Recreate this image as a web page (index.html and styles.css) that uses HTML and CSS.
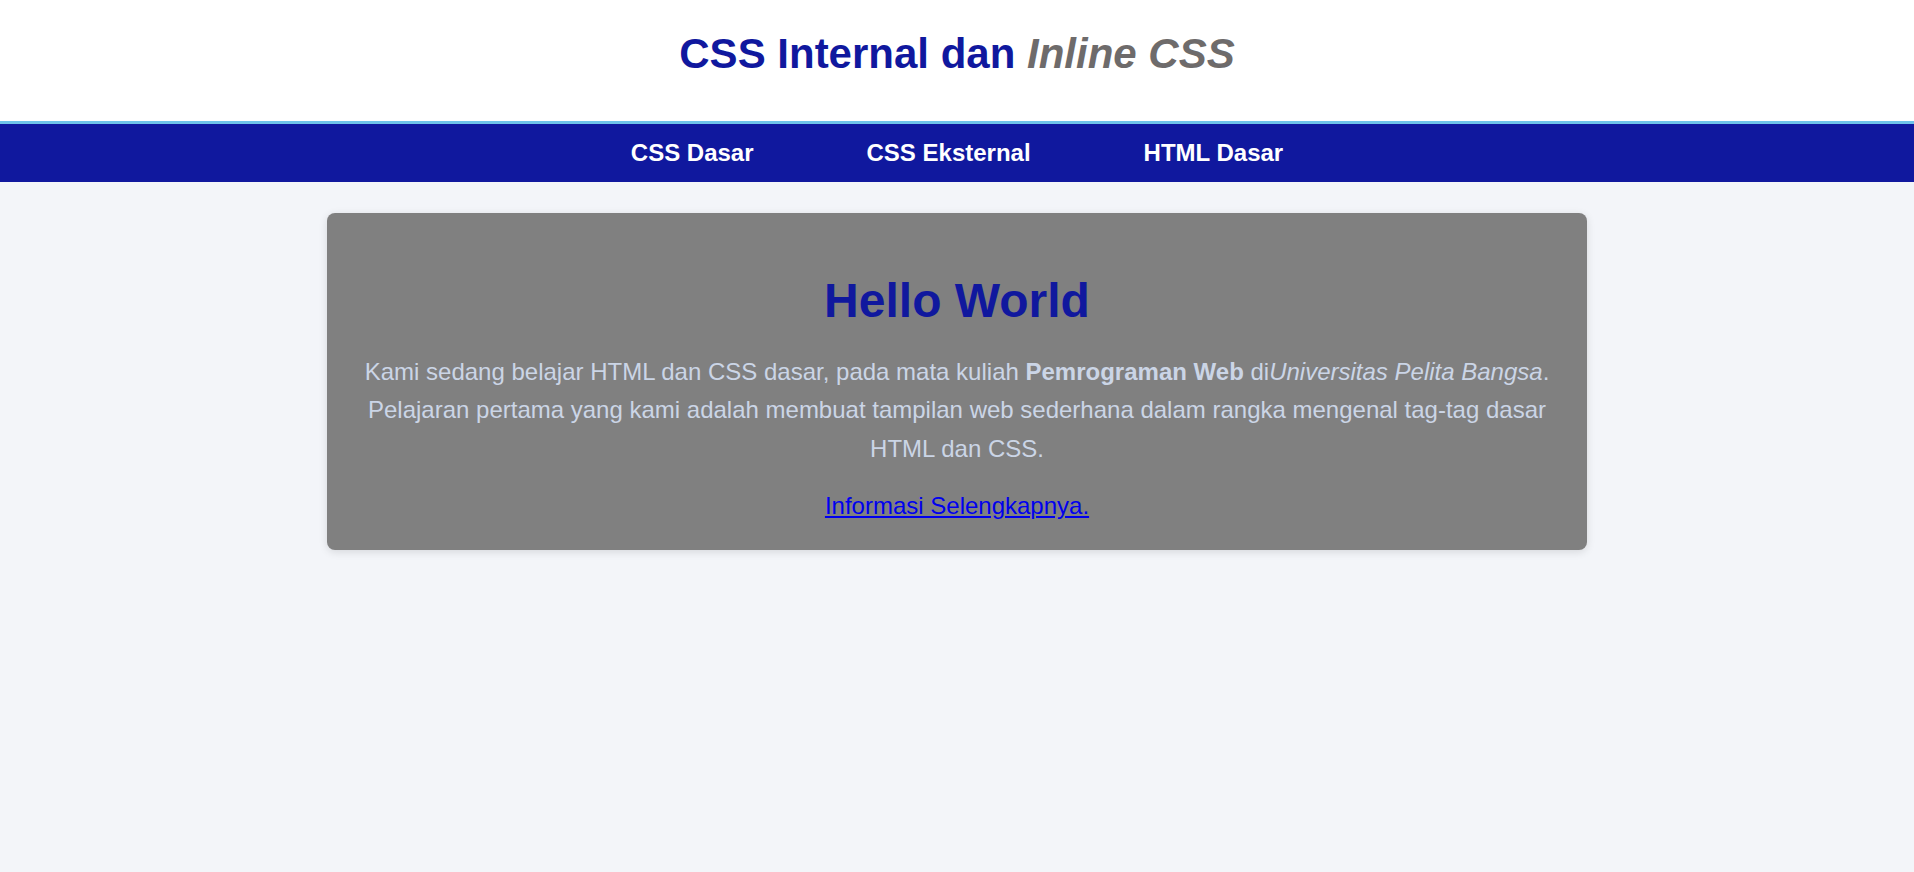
FILE: index.html
```html
<!DOCTYPE html>
<html lang="id">
<head>
<meta charset="utf-8">
<title>CSS Internal dan Inline CSS</title>
<link rel="stylesheet" href="styles.css">
</head>
<body>
<header class="site-header">
  <h1 class="site-title">CSS Internal dan <em class="title-em">Inline CSS</em></h1>
</header>
<nav class="main-nav">
  <a class="nav-link" href="#">CSS Dasar</a>
  <a class="nav-link" href="#">CSS Eksternal</a>
  <a class="nav-link" href="#">HTML Dasar</a>
</nav>
<main class="content">
  <section class="card">
    <h2 class="card-title">Hello World</h2>
    <p class="card-text">Kami sedang belajar HTML dan CSS dasar, pada mata kuliah <strong>Pemrograman Web</strong> di<em>Universitas Pelita Bangsa</em>. Pelajaran pertama yang kami adalah membuat tampilan web sederhana dalam rangka mengenal tag-tag dasar HTML dan CSS.</p>
    <p class="card-more"><a class="more-link" href="#">Informasi Selengkapnya.</a></p>
  </section>
</main>
</body>
</html>
```

FILE: styles.css
```css
* { box-sizing: border-box; }
html, body {
  margin: 0;
  padding: 0;
}
body {
  font-family: "Liberation Sans", Arial, sans-serif;
  background: #f3f5f9;
  min-height: 872px;
}
.site-header {
  background: #ffffff;
  padding: 30px 0 43px;
  border-bottom: 3px solid #6fc3ea;
  text-align: center;
}
.site-title {
  margin: 0;
  font-size: 42px;
  font-weight: bold;
  line-height: normal;
  color: #10189e;
}
.title-em {
  font-style: italic;
  color: #6e6b6b;
}
.main-nav {
  background: #10189e;
  display: flex;
  justify-content: center;
  gap: 113px;
  padding: 15px 0;
}
.nav-link {
  color: #ffffff;
  font-size: 24px;
  font-weight: bold;
  text-decoration: none;
  line-height: normal;
}
.content {
  padding-top: 31px;
  display: flex;
  justify-content: center;
}
.card {
  width: 1260px;
  background: #808080;
  border-radius: 8px;
  box-shadow: 0 2px 8px rgba(0, 0, 0, 0.12);
  padding: 30px 30px 30px;
  text-align: center;
}
.card-title {
  margin: 30px 0 25px;
  font-size: 48px;
  font-weight: bold;
  line-height: normal;
  color: #10189e;
}
.card-text {
  margin: 0 0 24px;
  font-size: 24px;
  line-height: 1.6;
  color: #cbd5e6;
}
.card-more {
  margin: 0;
  font-size: 24px;
  line-height: normal;
}
.more-link {
  color: #0000ee;
  text-decoration: underline;
}
```
